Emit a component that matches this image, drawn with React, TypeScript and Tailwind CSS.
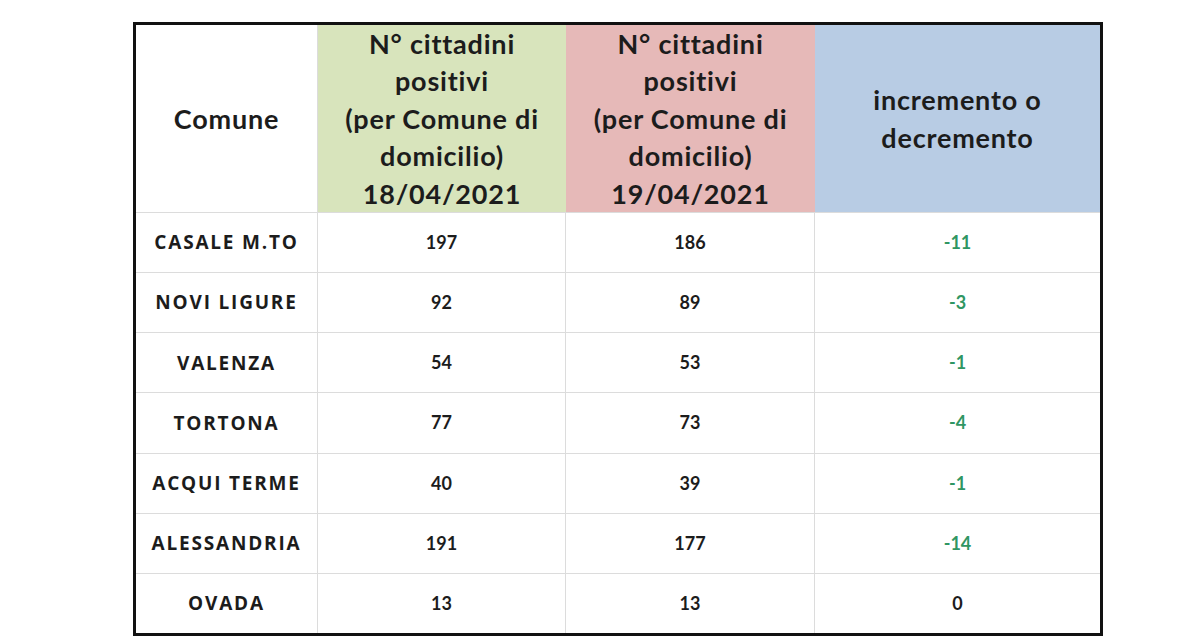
const rows = [
  { comune: "CASALE M.TO", a: "197", b: "186", diff: "-11" },
  { comune: "NOVI LIGURE", a: "92", b: "89", diff: "-3" },
  { comune: "VALENZA", a: "54", b: "53", diff: "-1" },
  { comune: "TORTONA", a: "77", b: "73", diff: "-4" },
  { comune: "ACQUI TERME", a: "40", b: "39", diff: "-1" },
  { comune: "ALESSANDRIA", a: "191", b: "177", diff: "-14" },
  { comune: "OVADA", a: "13", b: "13", diff: "0" },
];

export default function App() {
  return (
    <div
      className="w-[1200px] h-[640px] bg-white pt-[22px] pl-[133px]"
      style={{ fontFamily: "Lato, 'Open Sans', sans-serif" }}
    >
      <div className="w-[970px] border-[3px] border-[#111] grid grid-cols-[182px_248px_249px_285px] grid-rows-[187px_repeat(7,60.15px)] text-[#1c1c1c] font-bold">
        <div className="flex items-center justify-center text-[27px] tracking-[0.8px] leading-[37.5px] border-r border-[#dcdcdc]">
          Comune
        </div>
        <div className="flex items-center justify-center text-center text-[27px] tracking-[0.8px] leading-[37.5px] bg-[#d8e4bc]">
          N° cittadini
          <br />
          positivi
          <br />
          (per Comune di
          <br />
          domicilio)
          <br />
          18/04/2021
        </div>
        <div className="flex items-center justify-center text-center text-[27px] tracking-[0.8px] leading-[37.5px] bg-[#e6b9b8]">
          N° cittadini
          <br />
          positivi
          <br />
          (per Comune di
          <br />
          domicilio)
          <br />
          19/04/2021
        </div>
        <div className="flex items-center justify-center text-center text-[27px] tracking-[0.8px] leading-[37.5px] bg-[#b8cce4]">
          incremento o
          <br />
          decremento
        </div>
        {rows.map((r) => (
          <>
            <div
              key={r.comune + "c"}
              className="flex items-center justify-center font-['Open_Sans',sans-serif] text-[19px] tracking-[1.8px] border-t border-r border-[#dcdcdc]"
            >
              {r.comune}
            </div>
            <div
              key={r.comune + "a"}
              className="flex items-center justify-center text-[18px] border-t border-r border-[#dcdcdc]"
            >
              {r.a}
            </div>
            <div
              key={r.comune + "b"}
              className="flex items-center justify-center text-[18px] border-t border-r border-[#dcdcdc]"
            >
              {r.b}
            </div>
            <div
              key={r.comune + "d"}
              className={`flex items-center justify-center text-[18px] border-t border-[#dcdcdc] ${
                r.diff === "0" ? "text-[#1c1c1c]" : "text-[#2f9663]"
              }`}
            >
              {r.diff}
            </div>
          </>
        ))}
      </div>
    </div>
  );
}
